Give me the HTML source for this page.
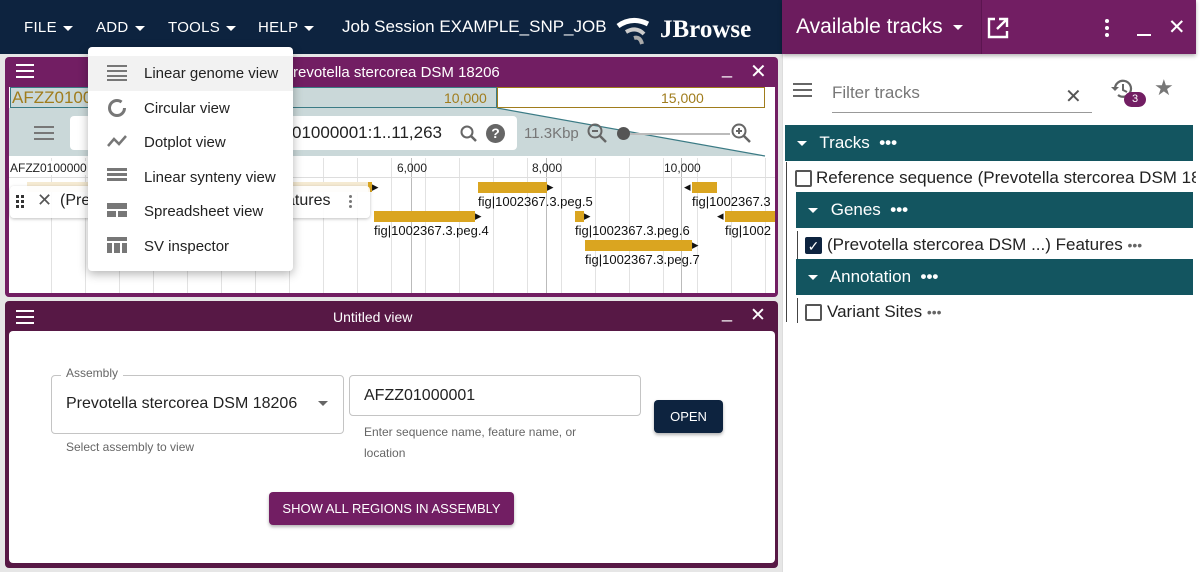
<!DOCTYPE html>
<html><head><meta charset="utf-8"><style>
*{box-sizing:border-box;margin:0;padding:0}
body{width:1200px;height:572px;overflow:hidden;background:#e6e6e6;font-family:"Liberation Sans",sans-serif;position:relative;color:#222}
.a{position:absolute}
.w{color:#fff}
.tri{display:inline-block;width:0;height:0;border-left:5px solid transparent;border-right:5px solid transparent;border-top:5px solid currentColor;vertical-align:middle;margin-left:6px}
.bar{background:#daa520;height:11px;position:absolute}
.lbl{position:absolute;font-size:13px;color:#111;white-space:nowrap}
.cat{position:absolute;background:#135560;color:#fff;font-size:17px;height:36px;line-height:36px}
.cb{position:absolute;width:17px;height:17px;border:2px solid #555;border-radius:2px;background:#fff}
.mi{position:absolute;left:0;width:205px;height:35px;font-size:15px;line-height:35px;padding-left:56px;color:#222}
</style></head><body>
<div class="a" style="left:0;top:0;width:782px;height:54px;background:#0d233f"></div>
<div class="a w" style="left:24px;top:19px;font-size:15px;letter-spacing:.3px">FILE<span class="tri"></span></div>
<div class="a w" style="left:96px;top:19px;font-size:15px;letter-spacing:.3px">ADD<span class="tri"></span></div>
<div class="a w" style="left:168px;top:19px;font-size:15px;letter-spacing:.3px">TOOLS<span class="tri"></span></div>
<div class="a w" style="left:258px;top:19px;font-size:15px;letter-spacing:.3px">HELP<span class="tri"></span></div>
<div class="a w" style="left:342px;top:17px;font-size:17px">Job Session EXAMPLE_SNP_JOB</div>
<svg class="a" style="left:614px;top:14px" width="46" height="34" viewBox="0 0 46 34"><path d="M4 12 Q18 2 34 10" stroke="#fff" stroke-width="5" fill="none"/><path d="M12 18 Q22 12 30 20" stroke="#ccc" stroke-width="4" fill="none"/><path d="M20 24 Q26 22 28 30" stroke="#aaa" stroke-width="4" fill="none"/></svg>
<div class="a w" style="left:660px;top:16px;font-size:25px;font-family:'Liberation Serif',serif;font-weight:bold">JBrowse</div>

<div class="a" style="left:5px;top:57px;width:773px;height:240px;background:#721e63;border-radius:4px"></div>
<div class="a" style="left:16px;top:64px;width:18px;height:2px;background:#fff;box-shadow:0 6px #fff,0 12px #fff"></div>
<div class="a w" style="left:283px;top:64px;font-size:15px">Prevotella stercorea DSM 18206</div>
<div class="a w" style="left:722px;top:58px;font-size:18px">_</div>
<div class="a w" style="left:750px;top:59px;font-size:20px">✕</div>
<div class="a" style="left:9px;top:87px;width:766px;height:206px;background:#fff"></div>
<div class="a" style="left:10px;top:87px;width:487px;height:21px;background:#cad8d9;border:1px solid #3b7b85"></div>
<div class="a" style="left:497px;top:87px;width:268px;height:21px;background:#fff;border:1px solid #a07c1c"></div>
<div class="a" style="left:12px;top:88px;font-size:17px;color:#a07c1c">AFZZ0100</div>
<div class="a" style="left:444px;top:90px;font-size:14px;color:#a07c1c">10,000</div>
<div class="a" style="left:661px;top:90px;font-size:14px;color:#a07c1c">15,000</div>
<svg class="a" style="left:9px;top:108px" width="766" height="50"><polygon points="0,0 488,0 756,48 0,48" fill="#cad8d9"/><line x1="488" y1="0" x2="756" y2="48" stroke="#3b7b85" stroke-width="1.2"/></svg>
<div class="a" style="left:34px;top:126px;width:20px;height:2px;background:#777;box-shadow:0 6px #777,0 12px #777"></div>
<div class="a" style="left:70px;top:116px;width:447px;height:34px;background:#fff;border-radius:4px"></div>
<div class="a" style="left:292px;top:123px;font-size:17px;color:#222">01000001:1..11,263</div>
<svg class="a" style="left:459px;top:124px" width="20" height="20"><circle cx="8" cy="8" r="5.5" stroke="#666" stroke-width="2" fill="none"/><line x1="12" y1="12" x2="17" y2="17" stroke="#666" stroke-width="2.5"/></svg>
<div class="a" style="left:486px;top:124px;width:19px;height:19px;border-radius:50%;background:#666;color:#fff;font-size:14px;font-weight:bold;text-align:center;line-height:19px">?</div>
<div class="a" style="left:524px;top:125px;font-size:15px;color:#777">11.3Kbp</div>
<svg class="a" style="left:586px;top:122px" width="22" height="22"><circle cx="9" cy="9" r="6.5" stroke="#666" stroke-width="2" fill="none"/><line x1="13" y1="13" x2="20" y2="20" stroke="#666" stroke-width="2.5"/><line x1="6" y1="9" x2="12" y2="9" stroke="#666" stroke-width="2"/></svg>
<div class="a" style="left:620px;top:133px;width:110px;height:2px;background:#bbb"></div>
<div class="a" style="left:617px;top:127px;width:13px;height:13px;border-radius:50%;background:#555"></div>
<svg class="a" style="left:730px;top:122px" width="22" height="22"><circle cx="9" cy="9" r="6.5" stroke="#666" stroke-width="2" fill="none"/><line x1="13" y1="13" x2="20" y2="20" stroke="#666" stroke-width="2.5"/><line x1="6" y1="9" x2="12" y2="9" stroke="#666" stroke-width="2"/><line x1="9" y1="6" x2="9" y2="12" stroke="#666" stroke-width="2"/></svg>
<div class="a" style="left:9px;top:158px;width:766px;height:135px;background:repeating-linear-gradient(90deg,transparent 0 33px,#e2e2e2 33px 34px);background-position:9px 0"></div>
<div class="a" style="left:411px;top:158px;width:1px;height:135px;background:#bbb"></div>
<div class="a" style="left:546px;top:158px;width:1px;height:135px;background:#bbb"></div>
<div class="a" style="left:681px;top:158px;width:1px;height:135px;background:#bbb"></div>
<div class="a" style="left:9px;top:177px;width:766px;height:1px;background:#ddd"></div>
<div class="a" style="left:10px;top:161px;font-size:12px;background:#fff">AFZZ0100000</div>
<div class="a" style="left:397px;top:161px;font-size:12px">6,000</div>
<div class="a" style="left:532px;top:161px;font-size:12px">8,000</div>
<div class="a" style="left:664px;top:161px;font-size:12px">10,000</div>
<div class="a" style="left:27px;top:182px;width:345px;height:10px;background:#f5ead2"></div>
<div class="a" style="left:368px;top:182px;width:4px;height:10px;background:#daa520"></div>
<div class="lbl" style="left:372px;top:179px">▸</div>
<div class="bar" style="left:478px;top:182px;width:69px"></div><div class="lbl" style="left:547px;top:179px">▸</div>
<div class="lbl" style="left:478px;top:194px">fig|1002367.3.peg.5</div>
<div class="bar" style="left:374px;top:211px;width:101px"></div><div class="lbl" style="left:475px;top:208px">▸</div>
<div class="lbl" style="left:374px;top:223px">fig|1002367.3.peg.4</div>
<div class="bar" style="left:575px;top:211px;width:9px"></div><div class="lbl" style="left:584px;top:208px">▸</div>
<div class="lbl" style="left:575px;top:223px">fig|1002367.3.peg.6</div>
<div class="bar" style="left:585px;top:240px;width:107px"></div><div class="lbl" style="left:692px;top:237px">▸</div>
<div class="lbl" style="left:585px;top:252px">fig|1002367.3.peg.7</div>
<div class="lbl" style="left:684px;top:179px">◂</div><div class="bar" style="left:692px;top:182px;width:25px"></div>
<div class="lbl" style="left:692px;top:194px">fig|1002367.3</div>
<div class="lbl" style="left:717px;top:208px">◂</div><div class="bar" style="left:725px;top:211px;width:50px"></div>
<div class="lbl" style="left:725px;top:223px;width:50px;overflow:hidden">fig|1002</div>
<div class="a" style="left:10px;top:186px;width:360px;height:32px;background:rgba(255,255,255,.9);border-radius:4px;box-shadow:0 1px 3px rgba(0,0,0,.25)"></div>
<div class="a" style="left:16px;top:195px;width:3px;height:3px;background:#333;box-shadow:5px 0 #333,0 5px #333,5px 5px #333,0 10px #333,5px 10px #333"></div>
<div class="a" style="left:37px;top:190px;font-size:18px;color:#555">✕</div>
<div class="a" style="left:60px;top:192px;font-size:16px">(Pre</div>
<div class="a" style="left:286px;top:192px;font-size:16px">atures</div>
<div class="a" style="left:349px;top:195px;width:3px;height:3px;border-radius:50%;background:#777;box-shadow:0 5px #777,0 10px #777"></div>

<div class="a" style="left:5px;top:301px;width:773px;height:267px;background:#571845;border-radius:4px"></div>
<div class="a" style="left:16px;top:310px;width:18px;height:2px;background:#fff;box-shadow:0 6px #fff,0 12px #fff"></div>
<div class="a w" style="left:333px;top:309px;font-size:14px">Untitled view</div>
<div class="a w" style="left:722px;top:302px;font-size:18px">_</div>
<div class="a w" style="left:750px;top:304px;font-size:19px">✕</div>
<div class="a" style="left:9px;top:331px;width:766px;height:232px;background:#fff;border-radius:4px"></div>
<div class="a" style="left:51px;top:375px;width:293px;height:59px;border:1px solid #c4c4c4;border-radius:4px"></div>
<div class="a" style="left:61px;top:366px;font-size:12px;color:#666;background:#fff;padding:0 5px">Assembly</div>
<div class="a" style="left:66px;top:395px;font-size:16px">Prevotella stercorea DSM 18206</div>
<div class="a" style="left:318px;top:401px;width:0;height:0;border-left:5px solid transparent;border-right:5px solid transparent;border-top:5px solid #666"></div>
<div class="a" style="left:66px;top:440px;font-size:12px;color:#666">Select assembly to view</div>
<div class="a" style="left:349px;top:375px;width:292px;height:41px;border:1px solid #c4c4c4;border-radius:4px"></div>
<div class="a" style="left:364px;top:387px;font-size:16px">AFZZ01000001</div>
<div class="a" style="left:364px;top:422px;font-size:12px;color:#666;line-height:21px">Enter sequence name, feature name, or<br>location</div>
<div class="a w" style="left:654px;top:400px;width:69px;height:33px;background:#0d233f;border-radius:4px;font-size:13px;text-align:center;line-height:33px;box-shadow:0 2px 3px rgba(0,0,0,.3)">OPEN</div>
<div class="a w" style="left:269px;top:492px;width:245px;height:33px;background:#721e63;border-radius:4px;font-size:13px;text-align:center;line-height:33px;box-shadow:0 2px 3px rgba(0,0,0,.3)">SHOW ALL REGIONS IN ASSEMBLY</div>

<div class="a" style="left:88px;top:47px;width:205px;height:224px;background:#fff;border-radius:4px;box-shadow:0 3px 10px rgba(0,0,0,.3)">
<div class="mi" style="top:9px;background:#f2f2f2">Linear genome view</div>
<div class="mi" style="top:44px">Circular view</div>
<div class="mi" style="top:78px">Dotplot view</div>
<div class="mi" style="top:113px">Linear synteny view</div>
<div class="mi" style="top:147px">Spreadsheet view</div>
<div class="mi" style="top:182px">SV inspector</div>
<svg class="a" style="left:19px;top:17px" width="22" height="200" fill="#777">
<rect x="0" y="1" width="20" height="2"/><rect x="0" y="6" width="20" height="2"/><rect x="0" y="11" width="20" height="2"/><rect x="0" y="15" width="20" height="2"/>
<circle cx="10" cy="44" r="7.5" stroke="#777" stroke-width="3" fill="none" stroke-dasharray="40 8"/>
<polyline points="1,82 7,75 12,80 19,72" stroke="#777" stroke-width="2.5" fill="none"/>
<rect x="0" y="104" width="20" height="3"/><rect x="0" y="109" width="20" height="3"/><rect x="0" y="114" width="20" height="3"/>
<rect x="0" y="139" width="20" height="6"/><rect x="0" y="147" width="9" height="6"/><rect x="11" y="147" width="9" height="6"/>
<rect x="0" y="173" width="20" height="4"/><rect x="0" y="179" width="5" height="10"/><rect x="7" y="179" width="6" height="10"/><rect x="15" y="179" width="5" height="10"/>
</svg>
</div>

<div class="a" style="left:782px;top:0;width:418px;height:572px;background:#fff;border-left:1px solid #ddd"></div>
<div class="a" style="left:782px;top:0;width:414px;height:54px;background:#721e63;box-shadow:0 2px 4px rgba(0,0,0,.3)"></div>
<div class="a" style="left:782px;top:0;width:200px;height:54px;background:#6c1c5e;border-right:1px solid #5c1550"></div>
<div class="a w" style="left:796px;top:15px;font-size:21px">Available tracks<span class="tri" style="margin-left:10px"></span></div>
<svg class="a" style="left:987px;top:17px" width="22" height="22"><path d="M8 2H2v18h18v-6" stroke="#fff" stroke-width="2.4" fill="none"/><path d="M12 2h8v8M20 2l-10 10" stroke="#fff" stroke-width="2.4" fill="none"/></svg>
<div class="a" style="left:1105px;top:19px;width:4px;height:4px;border-radius:50%;background:#fff;box-shadow:0 7px #fff,0 14px #fff"></div>
<div class="a" style="left:1137px;top:34px;width:14px;height:2px;background:#fff"></div>
<div class="a w" style="left:1168px;top:15px;font-size:21px">✕</div>
<div class="a" style="left:793px;top:83px;width:19px;height:2px;background:#666;box-shadow:0 6px #666,0 12px #666"></div>
<div class="a" style="left:832px;top:83px;font-size:17px;color:#777">Filter tracks</div>
<div class="a" style="left:832px;top:112px;width:260px;height:1px;background:#999"></div>
<div class="a" style="left:1065px;top:84px;font-size:20px;color:#555">✕</div>
<svg class="a" style="left:1110px;top:78px" width="24" height="22"><path d="M5 11a8 8 0 1 1 3 6" stroke="#666" stroke-width="2.2" fill="none"/><path d="M1 9l4 4 4-4" fill="#666"/><path d="M13 6v6l4 2" stroke="#666" stroke-width="2" fill="none"/></svg>
<div class="a w" style="left:1124px;top:92px;width:22px;height:15px;border-radius:8px;background:#721e63;font-size:11px;text-align:center;line-height:15px">3</div>
<div class="a" style="left:1154px;top:75px;font-size:22px;color:#777">★</div>
<div class="cat" style="left:785px;top:125px;width:408px;padding-left:12px"><span class="tri" style="margin:0 8px 0 0"></span> Tracks &nbsp;<b>•••</b></div>
<div class="a" style="left:786px;top:162px;width:1px;height:160px;background:#444"></div>
<div class="cb" style="left:795px;top:170px"></div>
<div class="a" style="left:816px;top:168px;font-size:17px;white-space:nowrap;width:380px;overflow:hidden">Reference sequence (Prevotella stercorea DSM 18206)</div>
<div class="cat" style="left:796px;top:192px;width:397px;padding-left:12px"><span class="tri" style="margin:0 8px 0 0"></span> Genes &nbsp;<b>•••</b></div>
<div class="a" style="left:797px;top:231px;width:1px;height:28px;background:#444"></div>
<div class="cb" style="left:805px;top:237px;background:#0d233f;border-color:#0d233f;color:#fff;font-size:14px;line-height:14px;text-align:center">✓</div>
<div class="a" style="left:827px;top:235px;font-size:17px;white-space:nowrap">(Prevotella stercorea DSM ...) Features <span style="color:#666;font-size:14px">•••</span></div>
<div class="cat" style="left:796px;top:259px;width:397px;padding-left:12px"><span class="tri" style="margin:0 8px 0 0"></span> Annotation &nbsp;<b>•••</b></div>
<div class="a" style="left:797px;top:298px;width:1px;height:25px;background:#444"></div>
<div class="cb" style="left:805px;top:304px"></div>
<div class="a" style="left:827px;top:302px;font-size:17px;white-space:nowrap">Variant Sites <span style="color:#666;font-size:14px">•••</span></div>
</body></html>
